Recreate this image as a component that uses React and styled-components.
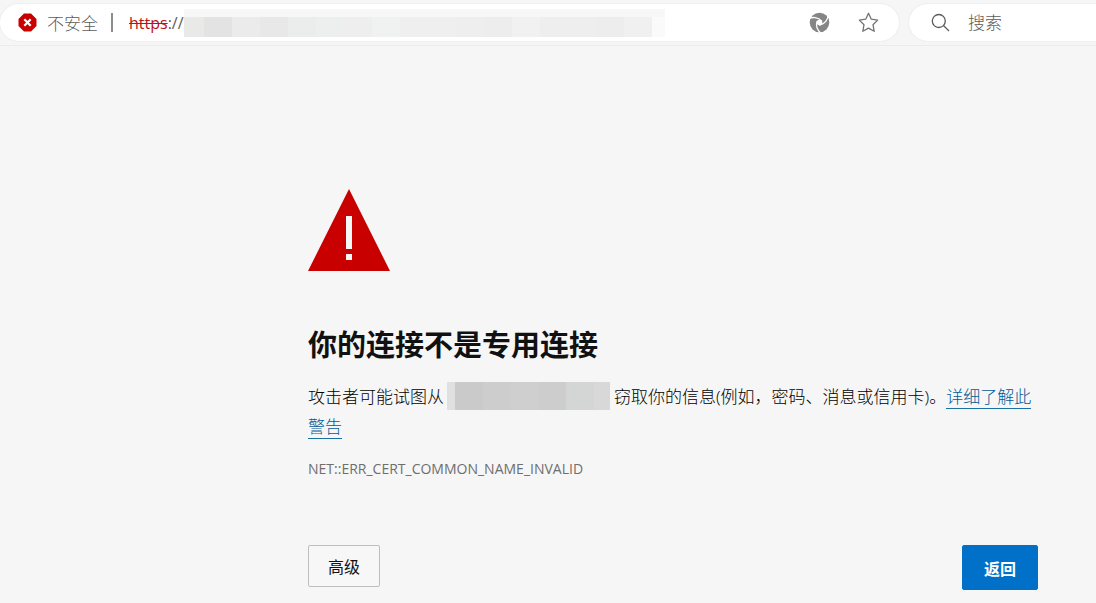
import styled, { createGlobalStyle } from "styled-components";

const GlobalStyle = createGlobalStyle`
    * {
        box-sizing: border-box;
    }

    body {
        margin: 0;
        background: #f6f6f6;
        color: #111;
        font-family: "Open Sans", "Noto Sans CJK SC", sans-serif;
        font-size: 17px;
    }

    button, input {
        font: inherit;
    }
`;

const Toolbar = styled.header`
    display: flex;
    gap: 10px;
    padding: 4px 0;
    border-bottom: 1px solid #ececec;
`;

const Pill = styled.div`
    display: flex;
    align-items: center;
    height: 37px;
    background: #fff;
    box-shadow: 0 0 2px rgba(0,0,0,0.1);
    color: #5c5c5c;
    font-weight: 300;

    svg {
        flex-shrink: 0;
    }
`;

const AddressBar = styled(Pill)`
    flex: 1;
    min-width: 0;
    padding: 0 20px 0 18px;
    border-radius: 19px;
`;

const SearchBar = styled(Pill)`
    flex: 0 0 187px;
    gap: 17px;
    padding-left: 22px;
    border-radius: 19px 0 0 19px;
`;

const SearchInput = styled.input`
    width: 100%;
    min-width: 0;
    padding: 0;
    border: 0;
    outline: none;
    background: none;
    color: #333;

    &::placeholder {
        color: #5c5c5c;
        opacity: 1;
    }
`;

const Security = styled.span`
    padding: 0 13px 0 10px;
    white-space: nowrap;
`;

const Divider = styled.span`
    width: 2px;
    height: 19px;
    margin-right: 16px;
    background: #8c8c8c;
`;

const Url = styled.span`
    font-size: 16px;
    font-weight: 400;
    white-space: nowrap;
`;

const Scheme = styled.s`
    color: #b8141a;
`;

const HiddenHost = styled.span`
    display: flex;
    flex: 0 1 481px;
    min-width: 0;
    height: 28px;
`;

const HostCell = styled.span`
    flex: ${(props) => props.$size} 1 0;
    border-top: 8px solid #f7f7f7;
    background: ${(props) => props.$color};
`;

const BarActions = styled.div`
    display: flex;
    gap: 28px;
    margin-left: auto;
`;

const IconButton = styled.button`
    display: flex;
    padding: 0;
    border: 0;
    background: none;
    color: #737373;
`;

const Main = styled.main`
    padding: 143px 58px 13px 308px;
`;

const Title = styled.h1`
    margin: 52px 0 15px;
    font-size: 29px;
    line-height: 44px;
    font-weight: 700;
`;

const Message = styled.p`
    margin: 0;
    color: #000;
    line-height: 30px;
    font-weight: 300;
`;

const HiddenSite = styled.span`
    display: inline-flex;
    width: 163px;
    height: 28px;
    margin: 0 4px 0 3px;
    vertical-align: top;
`;

const SiteCell = styled.span`
    flex: ${(props) => props.$size} 1 0;
    background: ${(props) => props.$color};
`;

const MoreLink = styled.a`
    border-bottom: 1px solid #1a6fa3;
    color: #005a96;
    text-decoration: none;
`;

const ErrorCode = styled.p`
    margin: 16px 0 65px;
    color: #6e6e6e;
    font-size: 14px;
    line-height: 22px;
`;

const Actions = styled.div`
    display: flex;
    align-items: flex-start;
    justify-content: space-between;
`;

const Button = styled.button`
    height: 42px;
    padding: 0 19px;
    border: 1px solid #bebebe;
    border-radius: 2px;
    background: #f7f7f7;
    color: #111;
    font-size: 16px;
`;

const PrimaryButton = styled(Button)`
    height: 45px;
    padding: 0 21px;
    border-color: #0070c9;
    background: #0070c9;
    color: #fff;
    font-weight: 700;
`;

const hostCells = [
    [20, "#e9e9e8"], [28, "#e3e3e3"], [28, "#ebebeb"], [28, "#e8e8e8"],
    [28, "#ebecec"], [28, "#edeeee"], [28, "#eeeeee"], [28, "#f0f2f1"],
    [28, "#efefef"], [28, "#efefef"], [28, "#eeeeee"], [28, "#ededed"],
    [28, "#f1f1f1"], [28, "#eeeeee"], [28, "#eeeeee"], [28, "#ededed"],
    [28, "#f0f0f0"], [13, "#fafafa"],
];

const siteCells = [
    [8, "#e0e0e0"], [28, "#cacaca"], [28, "#cdcdcd"], [28, "#cfcfcf"],
    [27, "#cdcdcd"], [28, "#d4d6d5"], [16, "#d8d8d8"],
];

function BlockedIcon() {
    return (
        <svg width="19" height="19" viewBox="0 0 19 19" aria-hidden="true">
            <path d="M6 0.5h7L18.500 6v7L13 18.500H6L0.500 13V6z" fill="#c80000" />
            <path d="M6.300 6.300l6.400 6.400m0-6.400l-6.400 6.400" stroke="#fff" strokeWidth="2.200" />
        </svg>
    );
}

function SwirlIcon() {
    return (
        <svg width="21" height="21" viewBox="0 0 21 21" aria-hidden="true">
            <circle cx="10.500" cy="10.500" r="9.800" fill="#858585" />
            <circle cx="10.500" cy="10.500" r="2.800" fill="#fff" />
            {[0, 120, 240].map((angle) => (
                <path
                    key={angle}
                    d="M-.5 7C3 4.800 9 4.600 13 9.300"
                    transform={`rotate(${angle} 10.5 10.5)`}
                    fill="none"
                    stroke="#fff"
                    strokeWidth="1.300"
                />
            ))}
        </svg>
    );
}

function StarIcon() {
    return (
        <svg width="21" height="21" viewBox="0 0 21 21" fill="none" stroke="currentColor" strokeWidth="1.300" strokeLinejoin="round" aria-hidden="true">
            <path d="M10.500 1.300l2.800 5.900 6.400.9-4.700 4.600 1.200 6.600-5.700-3.200-5.700 3.200L6 12.700 1.300 8.100l6.400-.9z" />
        </svg>
    );
}

function SearchIcon() {
    return (
        <svg width="20" height="20" viewBox="0 0 20 20" fill="none" stroke="currentColor" strokeWidth="1.300" aria-hidden="true">
            <circle cx="7.800" cy="8" r="6.500" />
            <path d="M12.500 12.500l5.500 5.500" />
        </svg>
    );
}

function WarningIcon() {
    return (
        <svg width="82" height="82" viewBox="0 0 82 82" display="block" aria-hidden="true">
            <path d="M41 0l41 82H0z" fill="#c80000" />
            <path d="M38 27h6v33h-6zM38 65h6v6h-6z" fill="#f6f6f6" />
        </svg>
    );
}

export default function App() {
    return (
        <>
            <GlobalStyle />
            <Toolbar>
                <AddressBar>
                    <BlockedIcon />
                    <Security>不安全</Security>
                    <Divider />
                    <Url>
                        <Scheme>https</Scheme>://
                    </Url>
                    <HiddenHost>
                        {hostCells.map(([size, color], i) => (
                            <HostCell key={i} $size={size} $color={color} />
                        ))}
                    </HiddenHost>
                    <BarActions>
                        <IconButton type="button">
                            <SwirlIcon />
                        </IconButton>
                        <IconButton type="button">
                            <StarIcon />
                        </IconButton>
                    </BarActions>
                </AddressBar>
                <SearchBar as="label">
                    <SearchIcon />
                    <SearchInput type="text" placeholder="搜索" />
                </SearchBar>
            </Toolbar>
            <Main>
                <WarningIcon />
                <Title>你的连接不是专用连接</Title>
                <Message>
                    攻击者可能试图从
                    <HiddenSite>
                        {siteCells.map(([size, color], i) => (
                            <SiteCell key={i} $size={size} $color={color} />
                        ))}
                    </HiddenSite>
                    窃取你的信息(例如，密码、消息或信用卡)。<MoreLink href="#">详细了解此警告</MoreLink>
                </Message>
                <ErrorCode>NET::ERR_CERT_COMMON_NAME_INVALID</ErrorCode>
                <Actions>
                    <Button type="button">高级</Button>
                    <PrimaryButton type="button">返回</PrimaryButton>
                </Actions>
            </Main>
        </>
    );
}
